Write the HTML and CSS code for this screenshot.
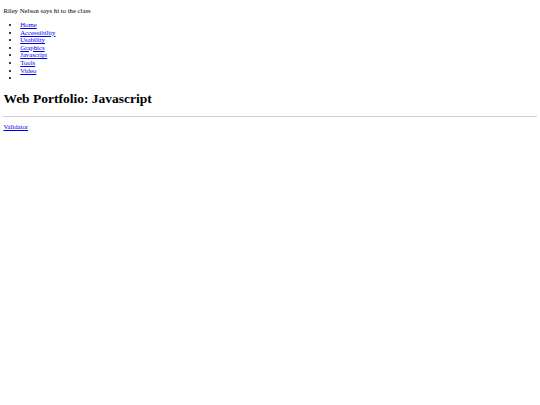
FILE: index.html
```html
<!DOCTYPE html>
<html lang="en">
<head>
<meta charset="utf-8">
<title>Web Portfolio: Javascript</title>
<link rel="stylesheet" href="styles.css">
</head>
<body class="page-body">
<p class="greeting">Riley Nelson says hi to the class</p>
<ul class="nav-list">
  <li><a class="nav-link" href="#">Home</a></li>
  <li><a class="nav-link" href="#">Accessibility</a></li>
  <li><a class="nav-link" href="#">Usability</a></li>
  <li><a class="nav-link" href="#">Graphics</a></li>
  <li><a class="nav-link" href="#">Javascript</a></li>
  <li><a class="nav-link" href="#">Tools</a></li>
  <li><a class="nav-link" href="#">Video</a></li>
  <li></li>
</ul>
<h1 class="page-title">Web Portfolio: Javascript</h1>
<hr class="rule">
<p class="footer-note"><a class="nav-link" href="#">Validator</a></p>
</body>
</html>
```
FILE: styles.css
```css
html {
  background: #ffffff;
}
.page-body {
  margin: 0 3.375px 3.375px;
  font-family: "Liberation Serif", "Times New Roman", serif;
  font-size: 6.75px;
  line-height: 7.6px;
  color: #000000;
}
.greeting {
  margin: 6.75px 0;
}
.nav-list {
  margin: 6.75px 0;
  padding-left: 16.875px;
  list-style: disc;
}
.nav-link {
  color: #0000ee;
  text-decoration: underline;
}
.page-title {
  font-size: 13.5px;
  line-height: 15.6px;
  font-weight: bold;
  margin: 9.05px 0;
}
.rule {
  margin: 3.375px 0;
  height: 0;
  border: 0;
  border-top: 1px solid #cfcfcf;
}
.footer-note {
  margin: 6.75px 0;
}
```
